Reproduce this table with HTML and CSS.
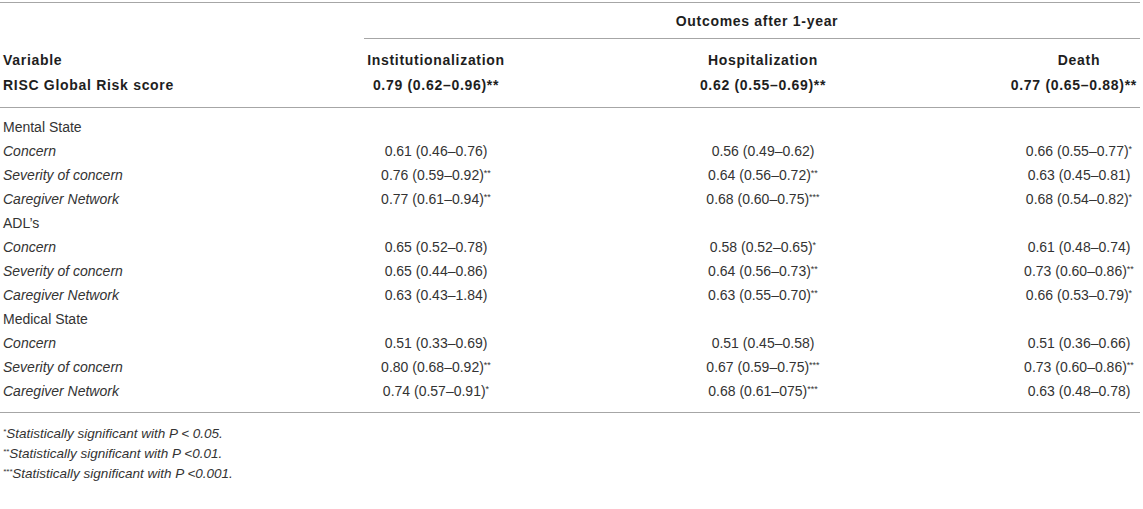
FILE: index.html
```html
<!DOCTYPE html>
<html lang="en">
<head>
  <meta charset="UTF-8">
  <title>Outcomes after 1-year</title>
  <link rel="stylesheet" href="styles.css">
</head>
<body>
  <div class="wrap">
    <table class="risk-table">
      <colgroup>
        <col class="c-var">
        <col class="c-inst">
        <col class="c-hosp">
        <col class="c-death">
      </colgroup>
      <thead>
        <tr class="row-group">
          <th></th>
          <th colspan="3" class="outcomes">Outcomes after 1-year</th>
        </tr>
        <tr class="row-names">
          <th class="label">Variable</th>
          <th>Institutionalization</th>
          <th>Hospitalization</th>
          <th>Death</th>
        </tr>
        <tr class="row-global">
          <th class="label">RISC Global Risk score</th>
          <th>0.79 (0.62&ndash;0.96)**</th>
          <th>0.62 (0.55&ndash;0.69)**</th>
          <th class="wide"><span>0.77 (0.65&ndash;0.88)**</span></th>
        </tr>
      </thead>
      <tbody>
        <tr class="first">
          <td class="label">Mental State</td><td></td><td></td><td></td>
        </tr>
        <tr>
          <td class="label sub">Concern</td>
          <td>0.61 (0.46&ndash;0.76)</td>
          <td>0.56 (0.49&ndash;0.62)</td>
          <td>0.66 (0.55&ndash;0.77)<sup>*</sup></td>
        </tr>
        <tr>
          <td class="label sub">Severity of concern</td>
          <td>0.76 (0.59&ndash;0.92)<sup>**</sup></td>
          <td>0.64 (0.56&ndash;0.72)<sup>**</sup></td>
          <td>0.63 (0.45&ndash;0.81)</td>
        </tr>
        <tr>
          <td class="label sub">Caregiver Network</td>
          <td>0.77 (0.61&ndash;0.94)<sup>**</sup></td>
          <td>0.68 (0.60&ndash;0.75)<sup>***</sup></td>
          <td>0.68 (0.54&ndash;0.82)<sup>*</sup></td>
        </tr>
        <tr>
          <td class="label">ADL&rsquo;s</td><td></td><td></td><td></td>
        </tr>
        <tr>
          <td class="label sub">Concern</td>
          <td>0.65 (0.52&ndash;0.78)</td>
          <td>0.58 (0.52&ndash;0.65)<sup>*</sup></td>
          <td>0.61 (0.48&ndash;0.74)</td>
        </tr>
        <tr>
          <td class="label sub">Severity of concern</td>
          <td>0.65 (0.44&ndash;0.86)</td>
          <td>0.64 (0.56&ndash;0.73)<sup>**</sup></td>
          <td>0.73 (0.60&ndash;0.86)<sup>**</sup></td>
        </tr>
        <tr>
          <td class="label sub">Caregiver Network</td>
          <td>0.63 (0.43&ndash;1.84)</td>
          <td>0.63 (0.55&ndash;0.70)<sup>**</sup></td>
          <td>0.66 (0.53&ndash;0.79)<sup>*</sup></td>
        </tr>
        <tr>
          <td class="label">Medical State</td><td></td><td></td><td></td>
        </tr>
        <tr>
          <td class="label sub">Concern</td>
          <td>0.51 (0.33&ndash;0.69)</td>
          <td>0.51 (0.45&ndash;0.58)</td>
          <td>0.51 (0.36&ndash;0.66)</td>
        </tr>
        <tr>
          <td class="label sub">Severity of concern</td>
          <td>0.80 (0.68&ndash;0.92)<sup>**</sup></td>
          <td>0.67 (0.59&ndash;0.75)<sup>***</sup></td>
          <td>0.73 (0.60&ndash;0.86)<sup>**</sup></td>
        </tr>
        <tr class="last">
          <td class="label sub">Caregiver Network</td>
          <td>0.74 (0.57&ndash;0.91)<sup>*</sup></td>
          <td>0.68 (0.61&ndash;075)<sup>***</sup></td>
          <td>0.63 (0.48&ndash;0.78)</td>
        </tr>
      </tbody>
    </table>

    <div class="notes">
      <p><sup>*</sup>Statistically significant with P &lt; 0.05.</p>
      <p><sup>**</sup>Statistically significant with P &lt;0.01.</p>
      <p><sup>***</sup>Statistically significant with P &lt;0.001.</p>
    </div>
  </div>
</body>
</html>
```

FILE: styles.css
```css
body {
  margin: 0;
  padding: 0;
  background-color: #ffffff;
  font-family: "Liberation Sans", Arial, sans-serif;
  font-size: 14px;
  color: #333333;
}
.wrap {
  width: 1140px;
  padding-top: 2px;
}
.risk-table {
  width: 1140px;
  border-collapse: collapse;
  table-layout: fixed;
}
.c-var {
  width: 364px;
}
.c-inst {
  width: 144px;
}
.c-hosp {
  width: 510px;
}
.c-death {
  width: 122px;
}
th, td {
  padding: 0;
  text-align: center;
  white-space: nowrap;
}
th {
  font-weight: bold;
  color: #1e1e1e;
  letter-spacing: 0.7px;
}
.label {
  text-align: left;
  padding-left: 3px;
}
.sub {
  font-style: italic;
}
.row-group th {
  border-top: 1px solid #a6a6a6;
  height: 35px;
  line-height: 18px;
  vertical-align: middle;
}
.row-group .outcomes {
  border-bottom: 1px solid #a6a6a6;
  padding-left: 10px;
}
.row-names th {
  height: 30px;
  line-height: 18px;
  vertical-align: bottom;
  padding-bottom: 2px;
}
.row-global th {
  height: 31px;
  line-height: 18px;
  vertical-align: top;
  padding-top: 5px;
  border-bottom: 1px solid #a6a6a6;
}
.row-global .wide {
  text-align: right;
  padding-right: 3px;
}
/* value is wider than the column, let it hang to the left */
.row-global .wide span {
  display: inline-block;
  margin-left: -40px;
}
td {
  height: 24px;
  line-height: 24px;
}
tbody tr.first td {
  padding-top: 7px;
}
tbody tr.last td {
  padding-bottom: 9px;
  border-bottom: 1px solid #a6a6a6;
}
sup {
  font-size: 9px;
  line-height: 0;
  vertical-align: 4px;
}
.notes {
  padding-top: 11px;
  padding-left: 3px;
}
.notes p {
  margin: 0;
  font-style: italic;
  line-height: 20px;
  font-size: 13.5px;
}
.notes sup {
  font-size: 8px;
}
```
